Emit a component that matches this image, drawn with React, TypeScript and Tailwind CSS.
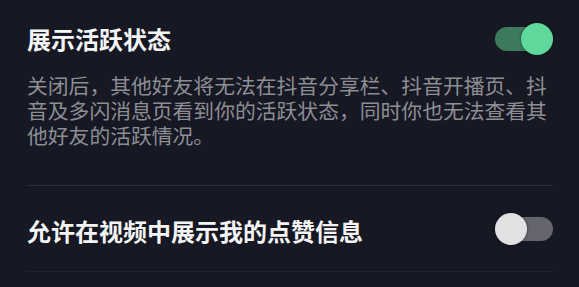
import React from 'react';

const Toggle = ({ on }: { on: boolean }) => {
    return (
        <div className="relative w-[58px] h-[32px] flex items-center">
            <div className={on ? "w-full h-[24px] rounded-full bg-[#3d7a5b]" : "w-full h-[24px] rounded-full bg-[#65666d]"} />
            <div
                className={
                    on
                        ? "absolute right-0 top-0 w-[32px] h-[32px] rounded-full bg-[#5fd89b] shadow-[0_0_3px_rgba(0,0,0,0.5)]"
                        : "absolute left-0 top-0 w-[32px] h-[32px] rounded-full bg-[#e1e1e4] shadow-[0_0_3px_rgba(0,0,0,0.5)]"
                }
            />
        </div>
    );
};

export default function App() {
    return (
        <div
            className="w-[579px] h-[287px] overflow-hidden bg-[#161823] px-[26px]"
            style={{ fontFamily: '"Noto Sans CJK SC", "Noto Sans", sans-serif' }}
        >
            <div className="pt-[22px] pb-[37px] border-b border-[#2a2b35]">
                <div className="flex items-center justify-between h-[34px]">
                    <h2 className="text-[24px] font-bold text-[#f4f4f5] leading-[34px] pl-px">展示活跃状态</h2>
                    <Toggle on={true} />
                </div>
                <p className="mt-[17px] w-[540px] text-[20.8px] leading-[25px] text-[#8d8e94] pl-px">
                    关闭后，其他好友将无法在抖音分享栏、抖音开播页、抖音及多闪消息页看到你的活跃状态，同时你也无法查看其他好友的活跃情况。
                </p>
            </div>
            <div className="flex items-center justify-between h-[86px] border-b border-[#20212b]">
                <h2 className="text-[24px] font-bold text-[#f4f4f5] leading-[34px] pl-px mt-[4px]">允许在视频中展示我的点赞信息</h2>
                <Toggle on={false} />
            </div>
        </div>
    );
}
